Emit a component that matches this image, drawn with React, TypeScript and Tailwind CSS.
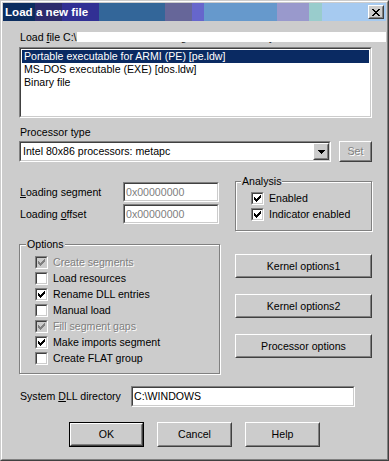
import React from "react";

const FACE = "bg-[#cccccc]";

function Sunken({
  className = "",
  innerClass = "",
  children,
}: {
  className?: string;
  innerClass?: string;
  children?: React.ReactNode;
}) {
  return (
    <div
      className={`border border-t-[#808080] border-l-[#808080] border-b-white border-r-white ${className}`}
    >
      <div
        className={`h-full w-full border border-t-[#404040] border-l-[#404040] border-b-[#cccccc] border-r-[#cccccc] ${innerClass}`}
      >
        {children}
      </div>
    </div>
  );
}

function Raised({
  className = "",
  innerClass = "",
  children,
}: {
  className?: string;
  innerClass?: string;
  children?: React.ReactNode;
}) {
  return (
    <div
      className={`border border-t-white border-l-white border-b-[#404040] border-r-[#404040] ${FACE} ${className}`}
    >
      <div
        className={`h-full w-full border border-t-[#cccccc] border-l-[#cccccc] border-b-[#808080] border-r-[#808080] flex items-center justify-center ${innerClass}`}
      >
        {children}
      </div>
    </div>
  );
}

function Button({
  label,
  className = "",
  isDefault = false,
  disabled = false,
}: {
  label: React.ReactNode;
  className?: string;
  isDefault?: boolean;
  disabled?: boolean;
}) {
  const txt = disabled
    ? "text-[#808080] [text-shadow:1px_1px_0_#ffffff]"
    : "text-black";
  if (isDefault) {
    return (
      <div className={`border border-black ${className}`}>
        <Raised className="h-full w-full">
          <span className={txt}>{label}</span>
        </Raised>
      </div>
    );
  }
  return (
    <Raised className={className}>
      <span className={txt}>{label}</span>
    </Raised>
  );
}

const CHECK_COLS = [3, 4, 5, 4, 3, 2, 1];

function Checkbox({
  checked,
  disabled = false,
}: {
  checked: boolean;
  disabled?: boolean;
}) {
  return (
    <Sunken
      className="w-[13px] h-[13px] shrink-0"
      innerClass={disabled ? "bg-[#cccccc]" : "bg-white"}
    >
      {checked && (
        <svg
          width="9"
          height="9"
          viewBox="0 0 9 9"
          shapeRendering="crispEdges"
          className="block"
        >
          {CHECK_COLS.map((y, i) => (
            <rect
              key={i}
              x={1 + i}
              y={y}
              width="1"
              height="3"
              fill={disabled ? "#808080" : "#000000"}
            />
          ))}
        </svg>
      )}
    </Sunken>
  );
}

function CheckRow({
  label,
  checked,
  disabled = false,
}: {
  label: string;
  checked: boolean;
  disabled?: boolean;
}) {
  return (
    <div className="h-[16px] flex items-center gap-[5px]">
      <Checkbox checked={checked} disabled={disabled} />
      <span
        className={
          disabled
            ? "text-[#808080] [text-shadow:1px_1px_0_#ffffff]"
            : "text-black"
        }
      >
        {label}
      </span>
    </div>
  );
}

function CloseX() {
  const rows = [
    [0, 1, 6, 7],
    [1, 2, 5, 6],
    [2, 3, 4, 5],
    [3, 4],
    [2, 3, 4, 5],
    [1, 2, 5, 6],
    [0, 1, 6, 7],
  ];
  return (
    <svg width="8" height="7" viewBox="0 0 8 7" shapeRendering="crispEdges">
      {rows.map((r, y) =>
        r.map((x) => (
          <rect key={`${x}-${y}`} x={x} y={y} width="1" height="1" fill="#000" />
        ))
      )}
    </svg>
  );
}

const TITLE_BLOCKS: { w: string; c: string }[] = [
  { w: "w-[32px]", c: "bg-[#0b2d5f]" },
  { w: "w-[27px]", c: "bg-[#2c2b6c]" },
  { w: "w-[37px]", c: "bg-[#313094]" },
  { w: "w-[66px]", c: "bg-[#336699]" },
  { w: "w-[27px]", c: "bg-[#666699]" },
  { w: "w-[12px]", c: "bg-[#6666cc]" },
  { w: "w-[73px]", c: "bg-[#6699cc]" },
  { w: "w-[32px]", c: "bg-[#9999cc]" },
  { w: "w-[13px]", c: "bg-[#99cccc]" },
];

export default function App() {
  return (
    <div className="w-[389px] h-[461px] font-['Liberation_Sans',Arial,sans-serif] text-[10.6px] leading-[13px] text-black">
      <div className="w-full h-full border border-t-[#cccccc] border-l-[#cccccc] border-b-[#404040] border-r-[#404040]">
        <div className="w-full h-full border border-t-white border-l-white border-b-[#808080] border-r-[#808080] bg-[#cccccc] p-[1px] flex flex-col">
          {/* Title bar */}
          <div className="relative h-[18px] flex shrink-0">
            {TITLE_BLOCKS.map((b, i) => (
              <div key={i} className={`${b.w} ${b.c} h-full`} />
            ))}
            <div className="flex-1 h-full bg-[#a6caf0]" />
            <div className="absolute left-[2px] top-0 h-full flex items-center text-white font-bold text-[11.6px] leading-[14px]">
              Load a new file
            </div>
            <Raised className="absolute right-[2px] top-[2px] w-[16px] h-[14px]">
              <CloseX />
            </Raised>
          </div>

          {/* Body */}
          <div className="pl-[16px] flex flex-col">
            {/* Load file row */}
            <div className="mt-[10px] h-[13px] flex">
              <span className="ml-[1px] whitespace-nowrap">
                Load <span className="underline">f</span>ile C:\
              </span>
              <div className="relative w-[310px] whitespace-nowrap">
                <span className="text-[#222]">
                  Documents and Settings\Administrator\My Documents\file.exe
                </span>
                <div className="absolute left-0 right-0 top-[1px] h-[10px] bg-white" />
              </div>
            </div>

            {/* List box */}
            <Sunken className="mt-[3px] w-[353px] h-[71px]" innerClass="bg-white pt-[1px] px-[1px]">
              <div className="h-[13px] bg-[#0a2a62] text-white pl-[2px] whitespace-nowrap">
                Portable executable for ARMI (PE) [pe.ldw]
              </div>
              <div className="h-[13px] pl-[2px] whitespace-nowrap">
                MS-DOS executable (EXE) [dos.ldw]
              </div>
              <div className="h-[13px] pl-[2px] whitespace-nowrap">Binary file</div>
            </Sunken>

            {/* Processor type */}
            <div className="mt-[8px] h-[13px] ml-[1px]">Processor type</div>
            <div className="mt-[2px] flex gap-[8px]">
              <Sunken className="w-[312px] h-[21px]" innerClass="bg-white flex items-center">
                <span className="flex-1 pl-[2px] whitespace-nowrap">
                  Intel 80x86 processors: metapc
                </span>
                <Raised className="w-[16px] h-full">
                  <svg width="7" height="4" viewBox="0 0 7 4" shapeRendering="crispEdges">
                    <path d="M0 0h7v1H0zM1 1h5v1H1zM2 2h3v1H2zM3 3h1v1H3z" fill="#000" />
                  </svg>
                </Raised>
              </Sunken>
              <Button label="Set" disabled className="w-[33px] h-[21px]" />
            </div>

            {/* Loading + Analysis */}
            <div className="mt-[13px] h-[56px] flex">
              <div className="w-[216px] pt-[7px] flex flex-col gap-[2px]">
                <div className="h-[20px] flex items-center">
                  <span className="w-[104px] pl-[1px]">
                    <span className="underline">L</span>oading segment
                  </span>
                  <Sunken className="w-[96px] h-[20px]" innerClass="bg-white flex items-center pl-[1px] text-[#808080]">
                    0x00000000
                  </Sunken>
                </div>
                <div className="h-[20px] flex items-center">
                  <span className="w-[104px] pl-[1px]">
                    Loading <span className="underline">o</span>ffset
                  </span>
                  <Sunken className="w-[96px] h-[20px]" innerClass="bg-white flex items-center pl-[1px] text-[#808080]">
                    0x00000000
                  </Sunken>
                </div>
              </div>
              <div className="relative w-[137px] pt-[6px]">
                <div className="h-[50px] border border-[#808080] shadow-[inset_1px_1px_0_#ffffff,1px_1px_0_#ffffff] pt-[8px] pl-[15px] flex flex-col">
                  <CheckRow label="Enabled" checked />
                  <CheckRow label="Indicator enabled" checked />
                </div>
                <div className="absolute left-[6px] top-0 h-[12px] leading-[12px] px-[1px] bg-[#cccccc]">
                  Analysis
                </div>
              </div>
            </div>

            {/* Options + buttons */}
            <div className="mt-[7px] flex">
              <div className="relative w-[201px] pt-[6px]">
                <div className="h-[130px] border border-[#808080] shadow-[inset_1px_1px_0_#ffffff,1px_1px_0_#ffffff] pt-[9px] pl-[15px] flex flex-col">
                  <CheckRow label="Create segments" checked disabled />
                  <CheckRow label="Load resources" checked={false} />
                  <CheckRow label="Rename DLL entries" checked />
                  <CheckRow label="Manual load" checked={false} />
                  <CheckRow label="Fill segment gaps" checked disabled />
                  <CheckRow label="Make imports segment" checked />
                  <CheckRow label="Create FLAT group" checked={false} />
                </div>
                <div className="absolute left-[7px] top-0 h-[12px] leading-[12px] px-[1px] bg-[#cccccc]">
                  Options
                </div>
              </div>
              <div className="ml-[15px] pt-[16px] flex flex-col gap-[16px]">
                <Button label="Kernel options1" className="w-[137px] h-[24px]" />
                <Button label="Kernel options2" className="w-[137px] h-[24px]" />
                <Button label="Processor options" className="w-[137px] h-[24px]" />
              </div>
            </div>

            {/* System DLL directory */}
            <div className="mt-[12px] flex items-center">
              <span className="w-[112px] pl-[1px]">
                System <span className="underline">D</span>LL directory
              </span>
              <Sunken className="w-[224px] h-[21px]" innerClass="bg-white flex items-center pl-[1px]">
                C:\WINDOWS
              </Sunken>
            </div>

            {/* Bottom buttons */}
            <div className="mt-[15px] ml-[50px] flex gap-[13px]">
              <Button label="OK" isDefault className="w-[75px] h-[25px]" />
              <Button label="Cancel" className="w-[75px] h-[25px]" />
              <Button label="Help" className="w-[75px] h-[25px]" />
            </div>
          </div>
        </div>
      </div>
    </div>
  );
}
